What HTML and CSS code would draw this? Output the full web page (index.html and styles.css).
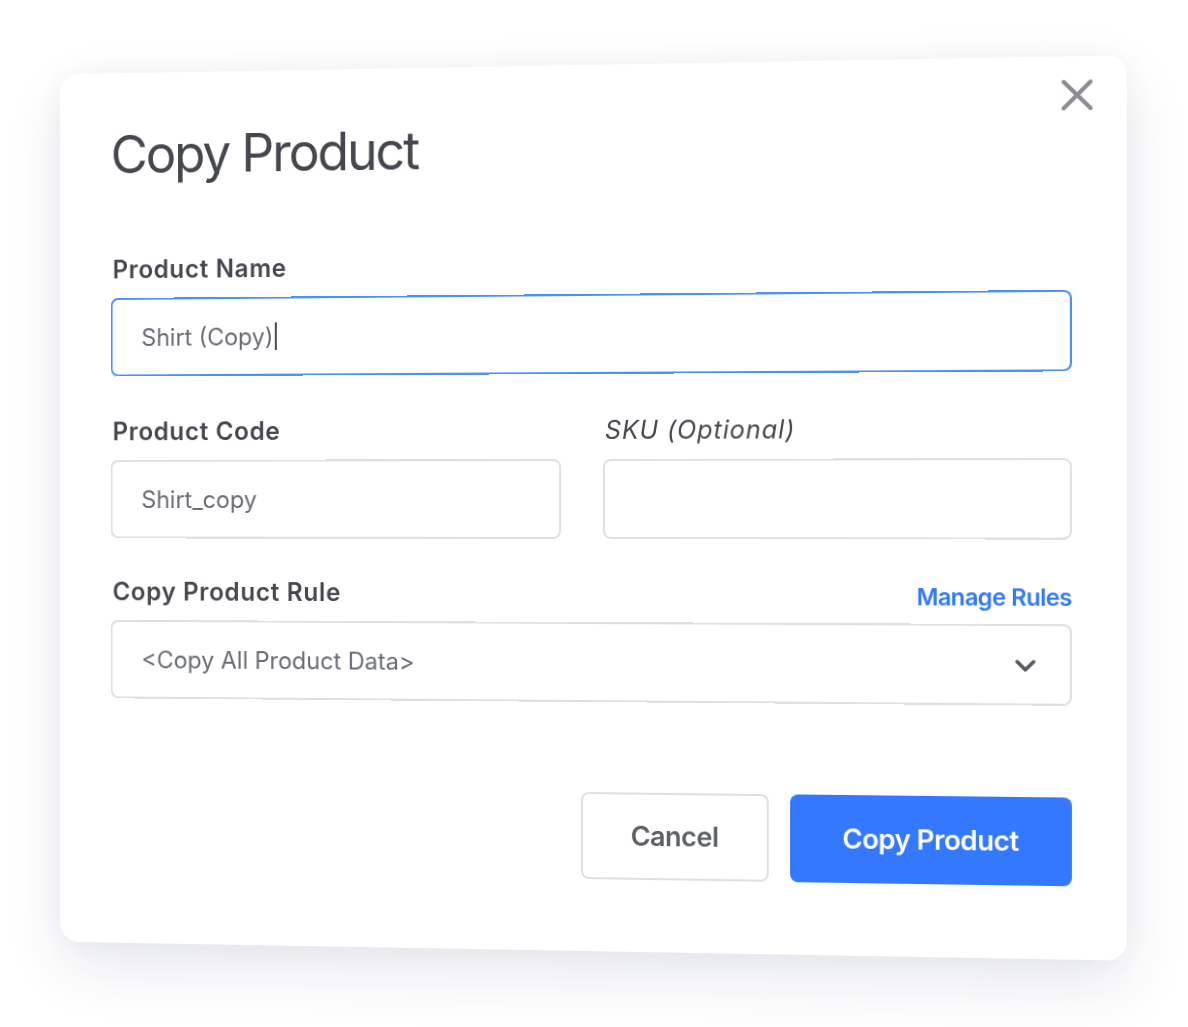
FILE: index.html
```html
<!DOCTYPE html>
<html lang="en">
<head>
  <meta charset="UTF-8" />
  <title>Copy Product</title>
  <link rel="stylesheet" href="styles.css">
</head>
<body>

  <div class="stage">
    <div class="modal">
      <button class="close-btn" aria-label="Close">
        <svg width="32" height="32" viewBox="0 0 32 32">
          <path d="M3 3 L29 29 M29 3 L3 29" stroke="#8a8d95" stroke-width="4" stroke-linecap="round" fill="none" />
        </svg>
      </button>

      <h1 class="title">Copy Product</h1>

      <div class="group">
        <div class="label-row"><label>Product Name</label></div>
        <div class="field focused">Shirt (Copy)<span class="caret"></span></div>
      </div>

      <div class="row">
        <div class="group">
          <div class="label-row"><label>Product Code</label></div>
          <div class="field">Shirt_copy</div>
        </div>
        <div class="group">
          <div class="label-row"><label class="optional">SKU (Optional)</label></div>
          <div class="field"></div>
        </div>
      </div>

      <div class="group">
        <div class="label-row">
          <label>Copy Product Rule</label>
          <a href="#" class="link">Manage Rules</a>
        </div>
        <div class="field select">
          &lt;Copy All Product Data&gt;
          <svg class="chevron" width="22" height="14" viewBox="0 0 22 14">
            <path d="M3 3 L11 11 L19 3" stroke="#55585f" stroke-width="3.5" stroke-linecap="round" stroke-linejoin="round" fill="none" />
          </svg>
        </div>
      </div>

      <div class="actions">
        <button class="btn btn-cancel">Cancel</button>
        <button class="btn btn-primary">Copy Product</button>
      </div>
    </div>
  </div>

</body>
</html>
```

FILE: styles.css
```css
* { margin: 0; padding: 0; box-sizing: border-box; font-family: 'Inter', 'Noto Sans', sans-serif; }
body { background: #ffffff; min-height: 100vh; }

.stage { padding: 65px 0 76px 47px; min-height: 100vh; }

.modal {
  position: relative; width: 1070px; height: 886px; background: #fff;
  border-radius: 20px; padding: 56px 53px 0 53px;
  box-shadow: 0 26px 60px rgba(40, 50, 100, 0.10), 0 0 40px rgba(40, 50, 100, 0.05);
  transform: perspective(2000px) rotateY(-4.6deg);
}

.close-btn {
  position: absolute; top: 22px; right: 32px; background: none; border: none;
  width: 32px; height: 32px; cursor: pointer;
}

.title {
  font-size: 53px; line-height: 54px; font-weight: 400; color: #45474e;
  letter-spacing: -2.2px; margin-bottom: 78px;
}

.group { display: flex; flex-direction: column; }
.label-row {
  display: flex; justify-content: space-between; align-items: flex-end;
  margin-bottom: 17px; padding-left: 2px;
}
label {
  font-size: 25px; line-height: 24px; font-weight: 600; color: #45474e;
  letter-spacing: 0.7px;
}
label.optional { font-style: italic; font-weight: 400; letter-spacing: 0.9px; }

.link {
  font-size: 23px; line-height: 23px; font-weight: 600; color: #2f78ff;
  text-decoration: none; margin-bottom: -3px; letter-spacing: -0.5px;
}

.field {
  position: relative; height: 80px; border: 2px solid #dfe0e4; border-radius: 8px;
  padding: 0 30px; display: flex; align-items: center;
  font-size: 24px; color: #696c74; background: #fff;
}
.field.focused { border-color: #4c92f6; margin-bottom: 44px; }
.caret { width: 2px; height: 28px; background: #45474e; margin-left: 1px; }

.row {
  display: grid; grid-template-columns: 1fr 1fr; gap: 42px; margin-bottom: 42px;
}

.chevron { position: absolute; right: 32px; top: 32px; }

.actions {
  display: flex; justify-content: flex-end; gap: 21px; margin-top: 90px;
}
.btn {
  height: 87px; border-radius: 8px; font-size: 27px; font-weight: 600;
  letter-spacing: -0.5px; cursor: pointer;
}
.btn-cancel {
  width: 187px; background: #fff; border: 2px solid #dfe0e4; color: #5d6068;
}
.btn-primary {
  width: 275px; background: #3478ff; border: none; color: #fff;
}
```
